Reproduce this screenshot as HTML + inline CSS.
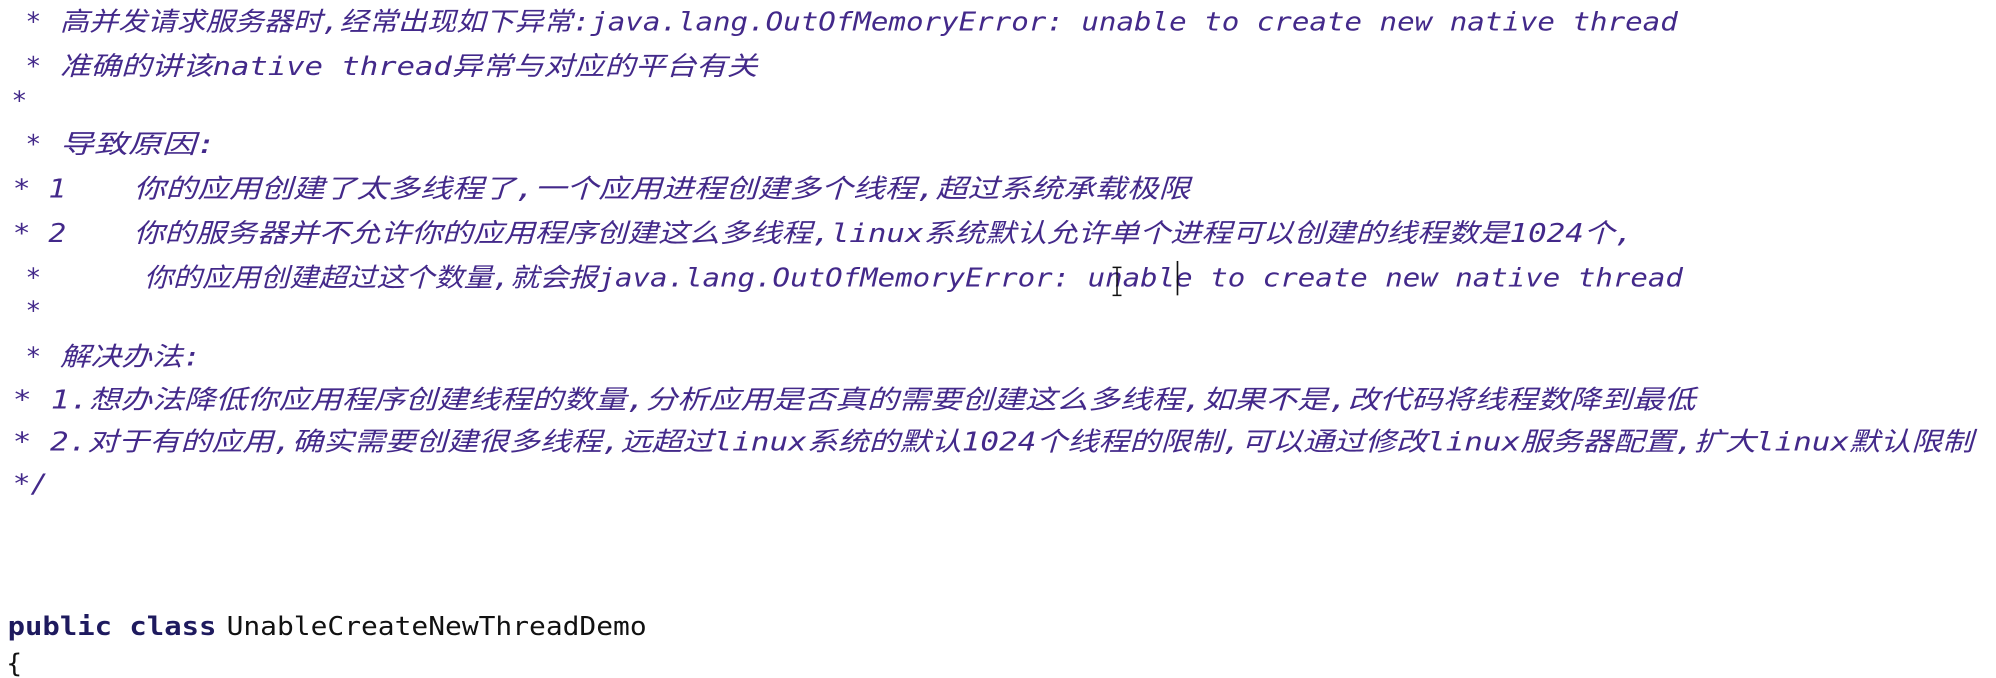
<!DOCTYPE html>
<html><head><meta charset="utf-8"><style>
html,body{margin:0;padding:0;background:#fff;width:1996px;height:678px;overflow:hidden}
svg{display:block}
.c{font-family:"DejaVu Sans Mono","Noto Sans CJK SC",monospace;font-style:italic;font-size:20.5px;fill:#43298a}
.k{font-family:"DejaVu Sans Mono",monospace;font-size:20.5px;font-weight:bold;fill:#1e1a5e}
.n{font-family:"DejaVu Sans Mono",monospace;font-size:20.5px;fill:#111}
</style></head><body>
<svg width="1996" height="678" viewBox="0 0 1568 532.6" xmlns="http://www.w3.org/2000/svg">
<g class="c">
<text x="20" y="24">*</text>
<text x="47" y="24" textLength="1271" lengthAdjust="spacingAndGlyphs">高并发请求服务器时,经常出现如下异常:java.lang.OutOfMemoryError: unable to create new native thread</text>
<text x="20" y="59">*</text>
<text x="47" y="59" textLength="548" lengthAdjust="spacingAndGlyphs">准确的讲该native thread异常与对应的平台有关</text>
<text x="9" y="86">*</text>
<text x="20" y="120">*</text>
<text x="47" y="120" textLength="123" lengthAdjust="spacingAndGlyphs">导致原因:</text>
<text x="10" y="155" textLength="42" lengthAdjust="spacingAndGlyphs">* 1</text>
<text x="105" y="155" textLength="830" lengthAdjust="spacingAndGlyphs">你的应用创建了太多线程了,一个应用进程创建多个线程,超过系统承载极限</text>
<text x="10" y="190" textLength="42" lengthAdjust="spacingAndGlyphs">* 2</text>
<text x="105" y="190" textLength="1178" lengthAdjust="spacingAndGlyphs">你的服务器并不允许你的应用程序创建这么多线程,linux系统默认允许单个进程可以创建的线程数是1024个,</text>
<text x="20" y="225">*</text>
<text x="113" y="225" textLength="1209" lengthAdjust="spacingAndGlyphs">你的应用创建超过这个数量,就会报java.lang.OutOfMemoryError: unable to create new native thread</text>
<text x="20" y="251">*</text>
<text x="20" y="287">*</text>
<text x="47" y="287" textLength="111" lengthAdjust="spacingAndGlyphs">解决办法:</text>
<text x="10" y="321" textLength="1322" lengthAdjust="spacingAndGlyphs">* 1.想办法降低你应用程序创建线程的数量,分析应用是否真的需要创建这么多线程,如果不是,改代码将线程数降到最低</text>
<text x="10" y="354" textLength="1540" lengthAdjust="spacingAndGlyphs">* 2.对于有的应用,确实需要创建很多线程,远超过linux系统的默认1024个线程的限制,可以通过修改linux服务器配置,扩大linux默认限制</text>
<text x="10" y="387" textLength="28" lengthAdjust="spacingAndGlyphs">*/</text>
</g>
<text class="k" x="6" y="499" textLength="164" lengthAdjust="spacingAndGlyphs">public class</text>
<text class="n" x="178" y="499" textLength="330" lengthAdjust="spacingAndGlyphs">UnableCreateNewThreadDemo</text>
<text class="n" x="5" y="528">{</text>
<line x1="925" y1="205" x2="925" y2="232" stroke="#111" stroke-width="1.3"/>
<path d="M874 210h7M877.5 210v22M874 232h7" stroke="#111" stroke-width="1.2" fill="none"/>
</svg>
</body></html>
